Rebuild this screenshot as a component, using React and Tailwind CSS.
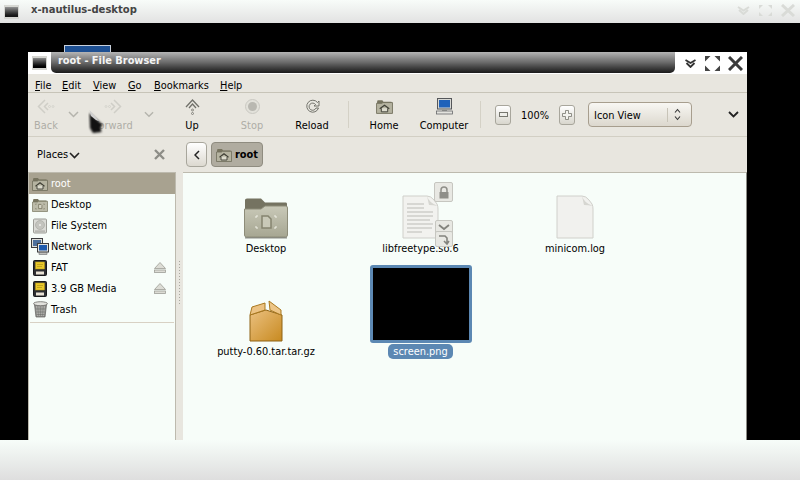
import React from 'react';

const FONT = 'font-["DejaVu_Sans",sans-serif]';

const WinIcon = () => (
  <div className="w-[15px] h-[14px] border-t-2 border-x border-b-2 border-[#d5d5d0] bg-gradient-to-b from-[#8a8a8a] via-[#333] to-[#000]" />
);

const HomeFolder = ({ size = 16 }) => (
  <svg width={size} height={size} viewBox="0 0 16 16">
    <path d="M1 3.5 L1.5 2 H6 L7 3.5 H14.5 V6 H1 Z" fill="#77745f" />
    <path d="M.5 5 H5.5 L6.5 4.3 H15.5 V14.5 H.5 Z" fill="#b5b3a0" stroke="#6f6d5a" strokeWidth=".8" />
    <path d="M3.5 10.2 L8 6.8 L12.5 10.2" fill="none" stroke="#3f3f35" strokeWidth="1.1" />
    <path d="M5 9.6 V13 H11 V9.6" fill="#dcdbcd" stroke="#3f3f35" strokeWidth=".9" />
  </svg>
);

const DesktopFolder = () => (
  <svg width="16" height="16" viewBox="0 0 16 16">
    <path d="M1 3.5 L1.5 2 H6 L7 3.5 H14.5 V6 H1 Z" fill="#77745f" />
    <path d="M.5 5 H5.5 L6.5 4.3 H15.5 V14.5 H.5 Z" fill="#bcbba9" stroke="#77755f" strokeWidth=".7" />
    <path d="M6.6 7.4 H9 L9.9 8.3 V11.6 H6.6 Z" fill="#d6d5c6" stroke="#77755f" strokeWidth=".8" />
    <path d="M3.6 7.6 V7 H4.6 M12.4 7.6 V7 H11.4 M3.6 11.4 V12 H4.6 M12.4 11.4 V12 H11.4" fill="none" stroke="#77755f" strokeWidth=".7" />
  </svg>
);

const BigFolder = () => (
  <svg width="44" height="41" viewBox="0 0 44 41">
    <defs>
      <linearGradient id="bigFolderBody" x1="0" y1="0" x2="0" y2="1">
        <stop offset="0" stopColor="#c9c9b8" />
        <stop offset="1" stopColor="#a6a692" />
      </linearGradient>
    </defs>
    <path d="M1 12 V2 Q1 .5 3 .5 H17 L21 4.5 H42 Q43 4.5 43 6 V14 H1 Z" fill="#757361" />
    <path d="M.5 11 H17 L21 8 H42 Q43.5 8 43.5 10 V37 Q43.5 39 41.5 39 H2.5 Q.5 39 .5 37 Z" fill="url(#bigFolderBody)" stroke="#8d8c79" />
    <rect x="1" y="39" width="42" height="1.6" fill="#5a5a4f" opacity=".55" />
    <path d="M18 18 H24 L27 21 V30 H18 Z" fill="#c9c9b8" stroke="#85846f" strokeWidth="1.5" />
    <path d="M12 20 V18 H14 M32 20 V18 H30 M12 28 V30 H14 M32 28 V30 H30" fill="none" stroke="#f0f0e6" strokeWidth="1" />
  </svg>
);

const DriveIcon = () => (
  <svg width="16" height="16" viewBox="0 0 16 16">
    <rect x="1.5" y="1" width="13" height="14" rx="1" fill="#dadbd6" stroke="#9b9c96" />
    <circle cx="8" cy="7" r="4.5" fill="#c3c4be" stroke="#a5a69f" strokeWidth=".6" />
    <circle cx="8" cy="7" r="1" fill="#eeeeea" />
    <rect x="3" y="12.5" width="10" height="1.2" fill="#a9aaa4" />
  </svg>
);

const NetworkIcon = () => (
  <svg width="18" height="17" viewBox="0 0 18 17">
    <rect x=".5" y=".5" width="11" height="9" fill="#dfe0dc" stroke="#3b3c3e" />
    <rect x="2" y="2" width="8" height="6" fill="#4c6f9c" />
    <rect x="6.5" y="5.5" width="11" height="8.5" fill="#e2e3df" stroke="#3b3c3e" />
    <rect x="8" y="7" width="8" height="5.5" fill="#1f5bad" />
    <rect x="8" y="14.5" width="8" height="2" fill="#bfc0bb" stroke="#55565a" strokeWidth=".5" />
  </svg>
);

const FatIcon = () => (
  <svg width="14" height="16" viewBox="0 0 14 16">
    <rect x=".5" y=".5" width="13" height="15" rx="1" fill="#2c2f33" stroke="#17181a" />
    <rect x="2.5" y="2" width="9" height="7" fill="#e8c92c" stroke="#b79a16" strokeWidth=".5" />
    <path d="M4 4.5 H10 M4 6.5 H9" stroke="#a88d12" strokeWidth=".6" />
    <rect x="3" y="11.5" width="8" height="3" fill="#e9e4d6" />
  </svg>
);

const TrashIcon = () => (
  <svg width="15" height="17" viewBox="0 0 15 17">
    <path d="M1.5 3.5 L3 16 H12 L13.5 3.5 Z" fill="#8f908c" stroke="#5e5f5b" strokeWidth=".7" />
    <path d="M3.5 5 L4.5 15 M6 5 L6.4 15 M9 5 L8.6 15 M11.5 5 L10.5 15" stroke="#c8c9c4" strokeWidth=".6" />
    <path d="M3 8 H12 M3.3 11 H11.7 M3.6 13.5 H11.4" stroke="#5f605c" strokeWidth=".5" />
    <ellipse cx="7.5" cy="2.7" rx="7" ry="2" fill="#e1e2dd" stroke="#696a66" strokeWidth=".8" />
  </svg>
);

const Eject = () => (
  <svg width="12" height="11" viewBox="0 0 12 11">
    <path d="M6 .5 L11.5 6.5 H.5 Z" fill="#dcdcd5" stroke="#9d9d96" strokeWidth=".8" />
    <rect x=".5" y="8" width="11" height="2.4" fill="#dcdcd5" stroke="#9d9d96" strokeWidth=".8" />
  </svg>
);

const Chevron = ({ color = '#b5b4ad', w = 1.5 }) => (
  <svg width="11" height="7" viewBox="0 0 11 7">
    <path d="M1 1 L5.5 5.5 L10 1" fill="none" stroke={color} strokeWidth={w} />
  </svg>
);

const ToolButton = ({ label, width, disabled, children }) => (
  <div className={`${width} flex flex-col items-center shrink-0 ${disabled ? 'text-[#aeada6]' : 'text-black'}`}>
    <div className="h-[20px] flex items-center justify-center">{children}</div>
    <span className="leading-[13px] mt-[2px] mb-[1px] whitespace-nowrap">{label}</span>
  </div>
);

const MenuLabel = ({ first, rest, width }) => (
  <span className={`${width} shrink-0`}>
    <span className="underline underline-offset-1 decoration-1">{first}</span>{rest}
  </span>
);

const PlaceRow = ({ icon, label, active, eject }) => (
  <div className={`h-[21px] flex items-center pl-[1px] pr-[9px] ${active ? 'bg-[#a8a290] text-white' : 'text-black'}`}>
    <div className="w-[20px] flex justify-center shrink-0">{icon}</div>
    <span className="ml-[1px] mt-[2px] flex-1">{label}</span>
    {eject && <Eject />}
  </div>
);

const FileItem = ({ label, children }) => (
  <div className="flex flex-col items-center">
    <div className="h-[60px] flex items-end justify-center">{children}</div>
    <span className="mt-[3px] whitespace-nowrap leading-[14px]">{label}</span>
  </div>
);

export default function App() {
  return (
    <div className={`${FONT} relative w-[800px] h-[480px] bg-black flex flex-col overflow-hidden text-[9.8px]`}>
      <div className="h-[23px] shrink-0 bg-gradient-to-b from-[#f8fcf9] to-[#e2e2e2] flex items-center pl-[4px] pr-[5px]">
        <div className="opacity-90"><WinIcon /></div>
        <span className="ml-[12px] font-bold text-[10px] text-[#444] -mt-[5px]">x-nautilus-desktop</span>
        <div className="ml-auto flex items-center gap-[8px] -mt-[3px]">
          <svg width="13" height="9" viewBox="0 0 13 9"><path d="M1 1 L6.5 4.5 L12 1 M2 4 L6.5 8 L11 4" fill="none" stroke="#d9dbd7" strokeWidth="2" /></svg>
          <svg width="15" height="13" viewBox="0 0 15 13"><path d="M1 1 H5 L1 5 Z M14 1 H10 L14 5 Z M1 12 H5 L1 8 Z M14 12 H10 L14 8 Z" fill="#d9dbd7" /></svg>
          <svg width="14" height="13" viewBox="0 0 14 13"><path d="M1 1 L13 12 M13 1 L1 12" stroke="#d9dbd7" strokeWidth="3" /></svg>
        </div>
      </div>

      <div className="flex-1 min-h-0 pl-[28px] pt-[29px]">
        <div className="w-[719px] h-[388px] bg-[#e8e6df] flex flex-col relative">
          <div className="h-[22px] shrink-0 bg-white flex items-center">
            <div className="w-[23px] flex justify-center"><WinIcon /></div>
            <div className="flex-1 h-[21px] mt-[-1px] rounded-bl-[5px] rounded-br-[5px] bg-gradient-to-b from-[#b5b5b5] via-[#6a6a6a] to-[#1b1b1b] flex items-center pl-[7px]">
              <span className="font-bold text-[9.8px] text-[#f4f4f4] -mt-[2px]">root - File Browser</span>
            </div>
            <div className="w-[72px] shrink-0 flex items-center justify-end pr-[4px] gap-[8px]">
              <svg width="13" height="9" viewBox="0 0 13 9"><path d="M1.5 1 L6.5 4 L11.5 1 M2.5 4 L6.5 8 L10.5 4" fill="none" stroke="#333" strokeWidth="1.8" /></svg>
              <svg width="15" height="15" viewBox="0 0 15 15"><path d="M0 0 H5.5 L0 5.5 Z M15 0 H9.5 L15 5.5 Z M0 15 H5.5 L0 9.5 Z M15 15 H9.5 L15 9.5 Z" fill="#444" /></svg>
              <svg width="15" height="15" viewBox="0 0 15 15"><path d="M1 1 L14 14 M14 1 L1 14" stroke="#3a3a3a" strokeWidth="3" /></svg>
            </div>
          </div>

          <div className="h-[19px] shrink-0 flex items-center pl-[7px] pt-[6px] border-b border-[#c7c4b8] text-black">
            <MenuLabel first="F" rest="ile" width="w-[27px]" />
            <MenuLabel first="E" rest="dit" width="w-[31px]" />
            <MenuLabel first="V" rest="iew" width="w-[35px]" />
            <MenuLabel first="G" rest="o" width="w-[26px]" />
            <MenuLabel first="B" rest="ookmarks" width="w-[66px]" />
            <MenuLabel first="H" rest="elp" width="w-[30px]" />
          </div>

          <div className="h-[44px] shrink-0 flex items-center border-b border-[#d2cfc4]">
            <ToolButton label="Back" width="w-[36px]" disabled>
              <svg width="18" height="15" viewBox="0 0 18 15"><path d="M8 1 L1.5 7.5 L8 14 M11 4 L7.5 7.5 L11 11" fill="none" stroke="#cfcec7" strokeWidth="1.5" /><circle cx="12.5" cy="7.5" r="1" fill="none" stroke="#cfcec7" strokeWidth=".7" /><circle cx="16" cy="7.5" r="1" fill="none" stroke="#cfcec7" strokeWidth=".7" /></svg>
            </ToolButton>
            <div className="w-[18px] flex justify-center"><Chevron /></div>
            <ToolButton label="Forward" width="w-[62px]" disabled>
              <svg width="18" height="15" viewBox="0 0 18 15"><path d="M10 1 L16.5 7.5 L10 14 M7 4 L10.5 7.5 L7 11" fill="none" stroke="#cfcec7" strokeWidth="1.5" /><circle cx="5.5" cy="7.5" r="1" fill="none" stroke="#cfcec7" strokeWidth=".7" /><circle cx="2" cy="7.5" r="1" fill="none" stroke="#cfcec7" strokeWidth=".7" /></svg>
            </ToolButton>
            <div className="w-[10px] flex justify-center"><Chevron /></div>
            <ToolButton label="Up" width="w-[76px]">
              <svg width="15" height="16" viewBox="0 0 15 16"><path d="M1 8 L7.5 1 L14 8 M4 9 L7.5 5 L11 9" fill="none" stroke="#71716a" strokeWidth="1.3" /><circle cx="7.5" cy="11" r="1" fill="none" stroke="#71716a" strokeWidth=".8" /><circle cx="7.5" cy="14.5" r="1" fill="none" stroke="#71716a" strokeWidth=".8" /></svg>
            </ToolButton>
            <ToolButton label="Stop" width="w-[44px]" disabled>
              <svg width="15" height="15" viewBox="0 0 15 15"><circle cx="7.5" cy="7.5" r="7" fill="#e2e1da" stroke="#c9c8c1" /><circle cx="7.5" cy="7.5" r="4.5" fill="#b9b8b1" /></svg>
            </ToolButton>
            <ToolButton label="Reload" width="w-[76px]">
              <svg width="15" height="15" viewBox="0 0 15 15"><path d="M12.5 3.5 A6 6 0 1 0 13.5 9 H11 A3.6 3.6 0 1 1 10.6 5.6 L9 7 H14 V2 Z" fill="#e9e8e1" stroke="#66665f" strokeWidth=".9" /></svg>
            </ToolButton>
            <div className="w-[1px] h-[27px] bg-[#d4d1c6] -ml-[2px] mr-[1px]" />
            <ToolButton label="Home" width="w-[68px]"><HomeFolder size={17} /></ToolButton>
            <ToolButton label="Computer" width="w-[52px]">
              <svg width="17" height="17" viewBox="0 0 17 17"><rect x="1.5" y=".5" width="14" height="10.5" fill="#d8d9d5" stroke="#55575a" /><rect x="3" y="2" width="11" height="7.5" fill="#1f62ba" /><path d="M6 11 H11 V13 H6 Z" fill="#9b9c97" /><rect x=".5" y="13" width="16" height="3" fill="#e3e3de" stroke="#66686a" strokeWidth=".8" /></svg>
            </ToolButton>
            <div className="w-[1px] h-[27px] bg-[#d4d1c6] ml-[10px]" />
            <button className="ml-[14px] w-[16px] h-[20px] rounded-[3px] border border-[#a8a69c] bg-gradient-to-b from-white to-[#d8d6cd] flex items-center justify-center">
              <span className="w-[9px] h-[5px] border border-[#77776f] bg-[#eeeeea]" />
            </button>
            <span className="w-[48px] text-center text-black mt-[3px]">100%</span>
            <button className="w-[16px] h-[20px] rounded-[3px] border border-[#a8a69c] bg-gradient-to-b from-white to-[#d8d6cd] flex items-center justify-center">
              <svg width="10" height="10" viewBox="0 0 10 10"><path d="M3.5 .5 H6.5 V3.5 H9.5 V6.5 H6.5 V9.5 H3.5 V6.5 H.5 V3.5 H3.5 Z" fill="#f2f2ee" stroke="#77776f" strokeWidth=".8" /></svg>
            </button>
            <div className="ml-[13px] w-[104px] h-[25px] rounded-[4px] border border-[#a79e8e] bg-gradient-to-b from-[#f8f7f3] to-[#dcd8ce] flex items-center text-black">
              <span className="pl-[5px] flex-1 mt-[3px]">Icon View</span>
              <div className="w-[19px] h-[14px] border-l border-[#c8c4b8] flex items-center justify-center mr-[5px]">
                <svg width="7" height="13" viewBox="0 0 7 13"><path d="M1 4.5 L3.5 1.5 L6 4.5 M1 8.5 L3.5 11.5 L6 8.5" fill="none" stroke="#333" strokeWidth="1.1" /></svg>
              </div>
            </div>
            <div className="ml-auto mr-[8px]"><Chevron color="#222" w={1.8} /></div>
          </div>

          <div className="flex-1 min-h-0 flex">
            <div className="w-[148px] shrink-0 flex flex-col">
              <div className="h-[35px] shrink-0 flex items-center pl-[9px] pr-[11px] text-black">
                <span className="mt-[2px]">Places</span>
                <span className="ml-[1px] mt-[1px]"><Chevron color="#222" w={1.6} /></span>
                <svg className="ml-auto" width="11" height="11" viewBox="0 0 11 11"><path d="M1 1 L10 10 M10 1 L1 10" stroke="#8d8d87" strokeWidth="2.4" /></svg>
              </div>
              <div className="flex-1 bg-[#f7fdf9] border-t border-l border-r border-[#bdbaae] flex flex-col">
                <PlaceRow active label="root" icon={<HomeFolder />} />
                <PlaceRow label="Desktop" icon={<DesktopFolder />} />
                <PlaceRow label="File System" icon={<DriveIcon />} />
                <PlaceRow label="Network" icon={<NetworkIcon />} />
                <PlaceRow label="FAT" icon={<FatIcon />} eject />
                <PlaceRow label="3.9 GB Media" icon={<FatIcon />} eject />
                <PlaceRow label="Trash" icon={<TrashIcon />} />
                <div className="mx-[1px] mt-[2px] h-[1px] bg-[#d8d1c4]" />
              </div>
            </div>

            <div className="w-[7px] shrink-0 flex items-center justify-center">
              <div className="w-[3px] h-[44px] mt-[-14px] bg-[radial-gradient(#aaa8a0_1px,transparent_1px)] bg-[length:3px_3px]" />
            </div>

            <div className="flex-1 min-w-0 flex flex-col">
              <div className="h-[35px] shrink-0 flex items-center pl-[3px] gap-[4px]">
                <button className="w-[21px] h-[25px] rounded-[4px] border border-[#a8a69c] bg-gradient-to-b from-white to-[#dcd9d0] flex items-center justify-center">
                  <svg width="6" height="10" viewBox="0 0 6 10"><path d="M5 1 L1 5 L5 9" fill="none" stroke="#222" strokeWidth="1.5" /></svg>
                </button>
                <div className="w-[52px] h-[25px] rounded-[4px] border border-[#8f8c80] bg-[#b0aca0] flex items-center pl-[4px] gap-[3px]">
                  <HomeFolder />
                  <span className="font-bold text-black mt-[2px]">root</span>
                </div>
              </div>
              <div className="flex-1 min-h-0 bg-[#f7fdf9] border-t border-r border-t-[#bdbaae] border-r-[#8a8a84] pl-[6px] pt-[6px] grid grid-cols-[154px_155px_154px] grid-rows-[103px_auto] text-black">
                <FileItem label="Desktop"><BigFolder /></FileItem>
                <FileItem label="libfreetype.so.6">
                  <svg width="37" height="44" viewBox="0 0 37 44"><path d="M1 1 H25 Q29 1 32 5 L35 9 Q36 11 36 14 V43 H1 Z" fill="#f2f2ef" stroke="#cfcfca" /><path d="M25 1 Q27 8 36 11 Q31 10 27 10 Z" fill="#d6d6d1" /><path d="M5 9 H22 M5 13 H22 M5 17 H31 M5 21 H31 M5 25 H28 M5 29 H31 M5 33 H30 M5 37 H20" stroke="#bcbcb7" strokeWidth="1" /></svg>
                </FileItem>
                <FileItem label="minicom.log">
                  <svg width="38" height="44" viewBox="0 0 38 44"><path d="M1 1 H26 Q30 1 33 5 L36 9 Q37 11 37 14 V43 H1 Z" fill="#f1f1ee" stroke="#d0d0cb" /><path d="M26 1 Q28 8 37 11 Q32 10 28 10 Z" fill="#d6d6d1" /></svg>
                </FileItem>
                <FileItem label="putty-0.60.tar.tar.gz">
                  <svg width="36" height="42" viewBox="0 0 36 42">
                    <defs>
                      <linearGradient id="boxBody" x1="0" y1="0" x2="1" y2="1">
                        <stop offset="0" stopColor="#ebc181" />
                        <stop offset="1" stopColor="#c88a20" />
                      </linearGradient>
                    </defs>
                    <path d="M2 15 L18 10 L34 15 V41 H2 Z" fill="url(#boxBody)" stroke="#8e6315" />
                    <path d="M2 15 L4 7 L17 3 L17 10 Z" fill="#ecc283" stroke="#a9781f" />
                    <path d="M22 10 L21 1 L33 10 L33 15 Z" fill="#edc587" stroke="#a9781f" />
                  </svg>
                </FileItem>
                <div className="flex flex-col items-center -mt-[17px]">
                  <div className="w-[102px] h-[78px] bg-black border-[3px] border-[#5c88b3] rounded-[3px]" />
                  <span className="mt-[1px] h-[15px] leading-[15px] whitespace-nowrap bg-[#5c88b3] text-white rounded-[5px] px-[5px]">screen.png</span>
                </div>
              </div>
            </div>
          </div>

          <div className="absolute left-[406px] top-[130px] w-[19px] h-[20px] rounded-[2px] border border-[#c6c6c0] bg-[#e8e8e3] flex items-center justify-center">
            <svg width="12" height="13" viewBox="0 0 12 13"><path d="M3 6 V4 A3 3 0 0 1 9 4 V6" fill="none" stroke="#8f8f89" strokeWidth="1.5" /><rect x="1.5" y="6" width="9" height="6.5" fill="#8f8f89" /></svg>
          </div>
          <div className="absolute left-[407px] top-[168px] w-[18px] h-[14px] rounded-[2px] border border-[#c6c6c0] bg-[#e8e8e3] flex items-center justify-center">
            <svg width="12" height="7" viewBox="0 0 12 7"><path d="M1 1 L6 5 L11 1" fill="none" stroke="#83837d" strokeWidth="1.8" /></svg>
          </div>
          <div className="absolute left-[407px] top-[179px] w-[18px] h-[16px] rounded-[2px] border border-[#c6c6c0] bg-[#e8e8e3] flex items-center justify-center">
            <svg width="12" height="11" viewBox="0 0 12 11"><path d="M1 2 H7 L9 4 V9 M6 7 L9 10 L11 7" fill="none" stroke="#83837d" strokeWidth="1.6" /></svg>
          </div>
        </div>
      </div>

      <div className="h-[40px] shrink-0 bg-gradient-to-b from-[#f7fdf9] to-[#dedede]" />

      <div className="absolute left-[64px] top-[45px] w-[47px] h-[7px] bg-[#1d4f92] border border-[#c8d0dc] border-b-0" />
      <svg className="absolute left-[88px] top-[108px]" width="18" height="28" viewBox="0 0 18 28">
        <path d="M1.5 5 L15 17 L12.5 19 L13.5 24 L5 25 L2 20 Z" fill="#111" className="blur-[1px]" />
        <path d="M1.5 2 L11 13 L8 12 L3 8 Z" fill="#d0d0d0" />
      </svg>
    </div>
  );
}
